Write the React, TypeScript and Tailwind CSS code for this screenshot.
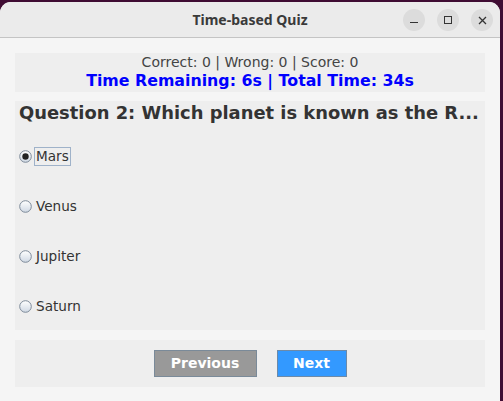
import React, { useState } from "react"

const options = ["Mars", "Venus", "Jupiter", "Saturn"]

const Radio = ({ checked }: { checked: boolean }) => (
  <svg width="13" height="13" viewBox="0 0 13 13" className="shrink-0">
    <defs>
      <linearGradient id="rg" x1="0" y1="0" x2="0" y2="1">
        <stop offset="0" stopColor="#ffffff" />
        <stop offset="1" stopColor="#cfd8e3" />
      </linearGradient>
    </defs>
    <circle cx="6.5" cy="6.5" r="5.8" fill="url(#rg)" stroke="#7d8a99" strokeWidth="1" />
    {checked && <circle cx="6.5" cy="6.5" r="3.2" fill="#222222" />}
  </svg>
)

const App = () => {
  const [selected, setSelected] = useState(0)

  return (
    <div className="h-[401px] w-[503px] overflow-hidden bg-[#3f0c33] pt-[2px] pr-[3px]">
      <div className="flex h-full w-[500px] flex-col overflow-hidden rounded-t-[11px] bg-[#f5f5f5] font-['DejaVu_Sans',sans-serif]">
        <div className="relative flex h-[36px] shrink-0 items-center justify-center border-b border-[#c4c4c4] bg-[#ebebeb]">
          <span className="font-['Noto_Sans',sans-serif] text-[14px] font-bold text-[#3a3a3a]">
            Time-based Quiz
          </span>
          <div className="absolute right-[7px] top-[7px] flex gap-[12px]">
            <div className="flex h-[22px] w-[22px] items-center justify-center rounded-full bg-[#dcdcdc]">
              <div className="mt-[5px] h-[1.5px] w-[8px] bg-[#333]" />
            </div>
            <div className="flex h-[22px] w-[22px] items-center justify-center rounded-full bg-[#dcdcdc]">
              <div className="h-[8px] w-[8px] border border-[#333]" />
            </div>
            <div className="flex h-[22px] w-[22px] items-center justify-center rounded-full bg-[#dcdcdc]">
              <svg width="9" height="9" viewBox="0 0 9 9">
                <path d="M1 1L8 8M8 1L1 8" stroke="#333" strokeWidth="1.3" />
              </svg>
            </div>
          </div>
        </div>

        <div className="flex flex-1 flex-col px-[15px] pt-[15px]">
          <div className="flex h-[39px] flex-col items-center bg-[#eeeeee]">
            <span className="mt-[1px] text-[14px] leading-[17px] text-[#444444]">
              Correct: 0 | Wrong: 0 | Score: 0
            </span>
            <span className="text-[15.8px] font-bold leading-[19px] text-[#0000ff]">
              Time Remaining: 6s | Total Time: 34s
            </span>
          </div>

          <div className="mt-[9px] flex h-[229px] flex-col bg-[#eeeeee] px-[4px]">
            <div className="mt-[1px] whitespace-nowrap text-[17.9px] font-bold leading-[22px] text-[#333333]">
              Question 2: Which planet is known as the R...
            </div>
            <div className="mt-[23px] flex flex-col gap-[31px]">
              {options.map((opt, i) => (
                <div
                  key={opt}
                  onClick={() => setSelected(i)}
                  className="flex h-[19px] cursor-pointer items-center gap-[2px]"
                >
                  <Radio checked={selected === i} />
                  <span
                    className={`px-[1px] text-[13.6px] leading-[17px] text-[#333333] ${
                      selected === i ? "border border-[#9fb2c9]" : "border border-transparent"
                    }`}
                  >
                    {opt}
                  </span>
                </div>
              ))}
            </div>
          </div>

          <div className="mt-[10px] flex h-[47px] items-center justify-center gap-[20px] bg-[#eeeeee]">
            <button className="h-[27px] w-[103px] border border-[#7a8a99] bg-[#999999] text-[14px] font-bold text-white">
              Previous
            </button>
            <button className="h-[27px] w-[70px] border border-[#6d8aa8] bg-[#3399ff] text-[14px] font-bold text-white">
              Next
            </button>
          </div>
        </div>
      </div>
    </div>
  )
}

export default App
